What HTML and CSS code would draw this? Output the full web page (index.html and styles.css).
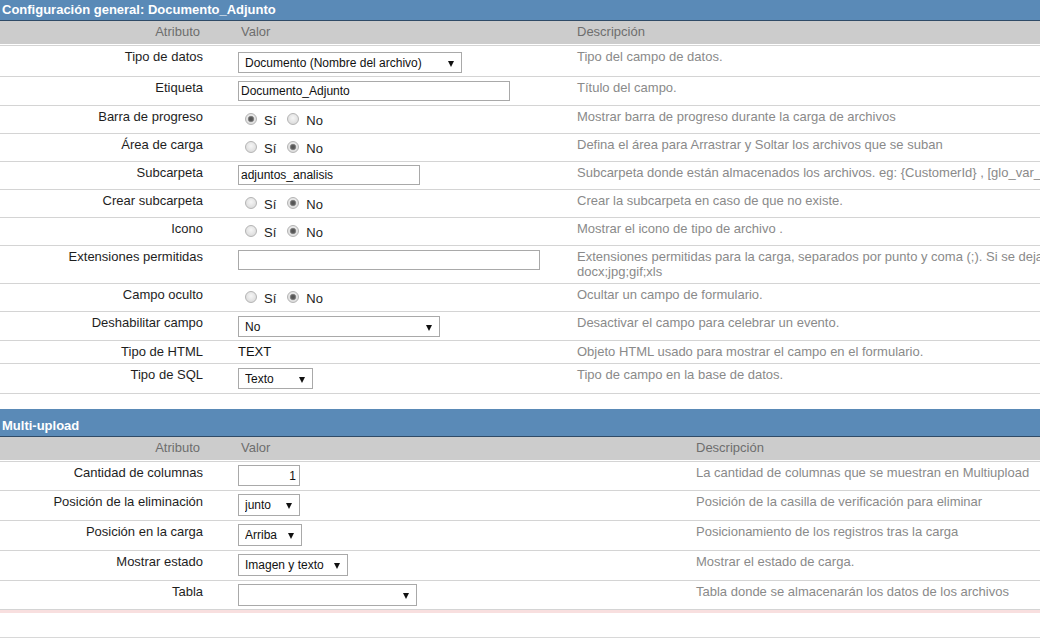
FILE: index.html
```html
<!DOCTYPE html>
<html lang="es">
<head>
<meta charset="utf-8">
<title>Configuración general: Documento_Adjunto</title>
<link rel="stylesheet" href="styles.css">
</head>
<body>
<div class="page">
  <section class="panel panel--general">
    <table class="props props--general">
      <colgroup><col class="c-attr"><col class="c-val c-val--general"><col class="c-desc"></colgroup>
      <thead>
        <tr><th colspan="3" class="title">Configuración general: Documento_Adjunto</th></tr>
        <tr class="cols"><th class="h-attr">Atributo</th><th class="h-val">Valor</th><th class="h-desc">Descripción</th></tr>
      </thead>
      <tbody>
        <tr>
          <td class="lbl">Tipo de datos</td>
          <td class="val v-sel v-sel--first"><span class="sel f-tipo"><select><option>Documento (Nombre del archivo)</option></select></span></td>
          <td class="desc">Tipo del campo de datos.</td>
        </tr>
        <tr>
          <td class="lbl">Etiqueta</td>
          <td class="val v-input"><input class="txt f-etiqueta" type="text" value="Documento_Adjunto"></td>
          <td class="desc">Título del campo.</td>
        </tr>
        <tr>
          <td class="lbl">Barra de progreso</td>
          <td class="val v-radio"><label class="opt"><input type="radio" name="barra" checked>Sí</label><label class="opt"><input type="radio" name="barra">No</label></td>
          <td class="desc">Mostrar barra de progreso durante la carga de archivos</td>
        </tr>
        <tr>
          <td class="lbl">Área de carga</td>
          <td class="val v-radio"><label class="opt"><input type="radio" name="area">Sí</label><label class="opt"><input type="radio" name="area" checked>No</label></td>
          <td class="desc">Defina el área para Arrastrar y Soltar los archivos que se suban</td>
        </tr>
        <tr>
          <td class="lbl">Subcarpeta</td>
          <td class="val v-input v-input--tight"><input class="txt f-subcarpeta" type="text" value="adjuntos_analisis"></td>
          <td class="desc">Subcarpeta donde están almacenados los archivos. eg: {CustomerId} , [glo_var_nombre]</td>
        </tr>
        <tr>
          <td class="lbl">Crear subcarpeta</td>
          <td class="val v-radio"><label class="opt"><input type="radio" name="crear">Sí</label><label class="opt"><input type="radio" name="crear" checked>No</label></td>
          <td class="desc">Crear la subcarpeta en caso de que no existe.</td>
        </tr>
        <tr>
          <td class="lbl">Icono</td>
          <td class="val v-radio"><label class="opt"><input type="radio" name="icono">Sí</label><label class="opt"><input type="radio" name="icono" checked>No</label></td>
          <td class="desc">Mostrar el icono de tipo de archivo .</td>
        </tr>
        <tr>
          <td class="lbl">Extensiones permitidas</td>
          <td class="val v-input"><input class="txt f-ext" type="text" value=""></td>
          <td class="desc">Extensiones permitidas para la carga, separados por punto y coma (;). Si se deja en blanco se aceptan todas. Ej.: doc;<br>docx;jpg;gif;xls</td>
        </tr>
        <tr>
          <td class="lbl">Campo oculto</td>
          <td class="val v-radio"><label class="opt"><input type="radio" name="oculto">Sí</label><label class="opt"><input type="radio" name="oculto" checked>No</label></td>
          <td class="desc">Ocultar un campo de formulario.</td>
        </tr>
        <tr>
          <td class="lbl">Deshabilitar campo</td>
          <td class="val v-sel"><span class="sel f-deshab"><select><option>No</option></select></span></td>
          <td class="desc">Desactivar el campo para celebrar un evento.</td>
        </tr>
        <tr>
          <td class="lbl">Tipo de HTML</td>
          <td class="val v-text">TEXT</td>
          <td class="desc">Objeto HTML usado para mostrar el campo en el formulario.</td>
        </tr>
        <tr>
          <td class="lbl">Tipo de SQL</td>
          <td class="val v-sel v-sel--loose"><span class="sel f-sql"><select><option>Texto</option></select></span></td>
          <td class="desc">Tipo de campo en la base de datos.</td>
        </tr>
      </tbody>
    </table>
  </section>

  <section class="panel panel--multi">
    <table class="props props--multi">
      <colgroup><col class="c-attr"><col class="c-val c-val--multi"><col class="c-desc"></colgroup>
      <thead>
        <tr><th colspan="3" class="title">Multi-upload</th></tr>
        <tr class="cols"><th class="h-attr">Atributo</th><th class="h-val">Valor</th><th class="h-desc">Descripción</th></tr>
      </thead>
      <tbody>
        <tr>
          <td class="lbl">Cantidad de columnas</td>
          <td class="val v-input2"><input class="txt txt--num f-cols" type="text" value="1"></td>
          <td class="desc">La cantidad de columnas que se muestran en Multiupload</td>
        </tr>
        <tr>
          <td class="lbl">Posición de la eliminación</td>
          <td class="val v-sel2"><span class="sel sel--tall f-junto"><select><option>junto</option></select></span></td>
          <td class="desc">Posición de la casilla de verificación para eliminar</td>
        </tr>
        <tr>
          <td class="lbl">Posición en la carga</td>
          <td class="val v-sel2"><span class="sel sel--tall f-arriba"><select><option>Arriba</option></select></span></td>
          <td class="desc">Posicionamiento de los registros tras la carga</td>
        </tr>
        <tr>
          <td class="lbl">Mostrar estado</td>
          <td class="val v-sel2"><span class="sel sel--tall f-estado"><select><option>Imagen y texto</option></select></span></td>
          <td class="desc">Mostrar el estado de carga.</td>
        </tr>
        <tr>
          <td class="lbl">Tabla</td>
          <td class="val v-sel2 v-sel2--last"><span class="sel sel--tall f-tabla"><select><option></option></select></span></td>
          <td class="desc">Tabla donde se almacenarán los datos de los archivos</td>
        </tr>
      </tbody>
    </table>
    <div class="panel-foot"></div>
  </section>
</div>
</body>
</html>
```

FILE: styles.css
```css
html, body {
  margin: 0;
  padding: 0;
  overflow: hidden;
  background: #fff;
}

body {
  font-family: "Liberation Sans", Arial, sans-serif;
  font-size: 13px;
  line-height: 15px;
  color: #222;
}

.page {
  width: 1040px;
  overflow: hidden;
  margin-top: -7px;
}

.panel--multi {
  margin-top: 15px;
}

.props {
  border-collapse: separate;
  border-spacing: 0;
  table-layout: fixed;
}

.props--general { width: 1500px; }
.props--multi { width: 1040px; }

.c-attr { width: 238px; }
.c-val--general { width: 339px; }
.c-val--multi { width: 458px; }

/* Title bar */
.title {
  background: #5a8ab7;
  color: #fff;
  font-weight: bold;
  text-align: left;
  padding: 9px 2px 3px;
  height: 15px;
  border-bottom: 1px solid #2f4b67;
  white-space: nowrap;
}

/* Column header */
.cols th {
  background: #cccccc;
  color: #6e6e6e;
  font-weight: normal;
  padding: 3px 0 5px;
  border-bottom: 1px solid #fff;
  white-space: nowrap;
}
.cols .h-attr { text-align: right; padding-right: 38px; }
.cols .h-val { text-align: left; padding-left: 3px; }
.cols .h-desc { text-align: left; padding-left: 0; }

tbody td {
  border-bottom: 1px solid #d4d4d4;
  vertical-align: top;
}
tbody tr:first-child td {
  border-top: 1px solid #d4d4d4;
}

.lbl {
  text-align: right;
  padding: 3px 35px 4px 0;
  white-space: nowrap;
  color: #1e1e1e;
}

.desc {
  padding: 3px 0 4px 0;
  color: #8a8a8a;
  white-space: nowrap;
}

.val { padding: 0; }
.v-text { padding: 3px 0 4px; color: #111; }
.v-sel { padding: 4px 0 3px; }
.v-sel--first { padding: 6px 0 3px; }
.v-sel--loose { padding: 4px 0 4px; }
.v-input { padding: 4px 0 4px; }
.v-input--tight { padding: 3px 0 4px; }
.v-radio { padding: 7px 0 5px 7px; line-height: 15px; }
.v-input2 { padding: 3px 0 4px; }
.v-sel2 { padding: 3px 0 4px; }
.v-sel2--last { padding: 3px 0 3px; }

/* Text inputs */
.txt {
  display: block;
  box-sizing: border-box;
  height: 20px;
  margin: 0;
  padding: 0 2px;
  border: 1px solid #a9a9a9;
  background: #fff;
  font-family: "Liberation Sans", Arial, sans-serif;
  font-size: 12px;
  color: #111;
  outline: none;
}
.txt--num { text-align: right; padding-right: 3px; height: 21px; }

.f-etiqueta { width: 272px; }
.f-subcarpeta { width: 182px; }
.f-ext { width: 302px; }
.f-cols { width: 62px; }

/* Selects */
.sel {
  position: relative;
  display: block;
  height: 21px;
}
.sel--tall { height: 22px; }
.sel select {
  -webkit-appearance: none;
  appearance: none;
  display: block;
  box-sizing: border-box;
  width: 100%;
  height: 100%;
  margin: 0;
  padding: 0 16px 0 6px;
  border: 1px solid #a9a9a9;
  border-radius: 0;
  background: #fff;
  font-family: "Liberation Sans", Arial, sans-serif;
  font-size: 12px;
  color: #111;
  outline: none;
}
.sel::after {
  content: "";
  position: absolute;
  right: 8px;
  top: 50%;
  margin-top: -2px;
  border-left: 3px solid transparent;
  border-right: 3px solid transparent;
  border-top: 6px solid #111;
  pointer-events: none;
}

.f-tipo { width: 224px; }
.f-deshab { width: 202px; }
.f-sql { width: 75px; }
.f-junto { width: 62px; }
.f-arriba { width: 64px; }
.f-estado { width: 110px; }
.f-tabla { width: 179px; }

/* Radios */
.opt {
  display: inline;
  color: #1e1e1e;
  white-space: nowrap;
}
.opt + .opt { margin-left: 11px; }
.opt input {
  -webkit-appearance: none;
  appearance: none;
  display: inline-block;
  vertical-align: baseline;
  box-sizing: border-box;
  width: 12px;
  height: 12px;
  margin: 0 7px 0 0;
  border-radius: 50%;
  border: 1px solid #b4b4b4;
  background: radial-gradient(circle at 50% 40%, #f6f6f6 0, #e2e2e2 60%, #d2d2d2 100%);
}
.opt input:checked {
  background:
    radial-gradient(circle at 50% 50%, #4f4f4f 0, #5e5e5e 2px, #9a9a9a 3px, rgba(0,0,0,0) 3.6px),
    radial-gradient(circle at 50% 40%, #f6f6f6 0, #e2e2e2 60%, #d2d2d2 100%);
}

.panel-foot {
  height: 24px;
  border-top: 3px solid #f8dfdf;
  border-bottom: 1px solid #d8d8d8;
}
```
